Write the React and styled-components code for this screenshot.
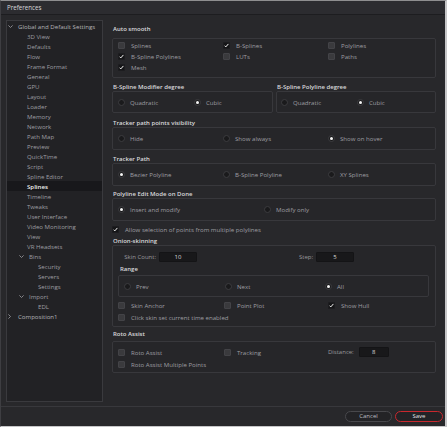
import React from 'react'
import styled, { createGlobalStyle } from 'styled-components'

const GlobalStyle = createGlobalStyle`
  html, body {
    margin: 0;
    padding: 0;
    background: #28282b;
  }
  body {
    font-family: "Open Sans", "Noto Sans", sans-serif;
    -webkit-font-smoothing: antialiased;
  }
`

const Window = styled.div`
  width: 447px;
  height: 427px;
  box-sizing: border-box;
  display: flex;
  flex-direction: column;
  background: #28282b;
  border-top: 1px solid #8e8e90;
  border-right: 2px solid #c6c6c8;
  border-bottom: 1px solid #c6c6c8;
  border-left: 1px solid #3e3e42;
  overflow: hidden;
`

const TitleBar = styled.div`
  flex: none;
  height: 13px;
  padding-left: 6px;
  font-size: 6.2px;
  line-height: 13px;
  color: #d8d8da;
  background: #2c2c30;
  border-bottom: 1px solid #1d1d20;
`

const Main = styled.div`
  flex: 1;
  min-height: 0;
  display: flex;
  gap: 9px;
  padding: 5px 9px 4px 5px;
`

const Sidebar = styled.div`
  width: 97px;
  flex: none;
  box-sizing: border-box;
  background: #222225;
  border: 1px solid #3a3a3e;
`

const TreeRow = styled.div`
  height: 10px;
  display: flex;
  align-items: center;
  padding-left: ${p => p.$indent}px;
  font-size: 6.1px;
  color: ${p => (p.$selected ? '#f2f2f2' : p.$strong ? '#b4b4b8' : '#9e9ea2')};
  font-weight: ${p => (p.$selected ? 600 : 400)};
  background: ${p => (p.$selected ? '#18181b' : 'transparent')};
  white-space: nowrap;
`

const Twisty = styled.span`
  width: 10px;
  flex: none;
  display: flex;
  align-items: center;
`

const Content = styled.div`
  flex: 1;
  display: flex;
  flex-direction: column;
`

const SectionLabel = styled.div`
  height: 8px;
  line-height: 8px;
  padding-left: ${p => p.$inset || 1}px;
  margin-top: ${p => p.$mt || 0}px;
  margin-bottom: ${p => p.$mb || 0}px;
  font-size: 6px;
  font-weight: 600;
  color: #dadadc;
  white-space: nowrap;
`

const Group = styled.div`
  box-sizing: border-box;
  border: 1px solid #38383c;
  border-radius: 2px;
  background: #262629;
  margin-top: ${p => p.$mt || 0}px;
  padding: ${p => p.$pad || '0 5px'};
  height: ${p => (p.$h ? `${p.$h}px` : 'auto')};
`

const OptionGrid = styled.div`
  display: grid;
  grid-template-columns: ${p => p.$cols};
  grid-auto-rows: ${p => p.$row}px;
  align-items: center;
  height: ${p => (p.$fill ? '100%' : 'auto')};
  margin-top: ${p => p.$mt || 0}px;
`

const Option = styled.label`
  display: flex;
  align-items: center;
  gap: ${p => p.$gap || 5}px;
  font-size: 6.1px;
  color: #9e9ea2;
  white-space: nowrap;
  grid-column: ${p => p.$span || 'auto'};
`

const Box = styled.span`
  width: 7px;
  height: 7px;
  flex: none;
  box-sizing: border-box;
  border-radius: 1px;
  display: flex;
  align-items: center;
  justify-content: center;
  background: ${p => (p.$on ? '#151517' : '#3a3a3d')};
  border: 1px solid ${p => (p.$on ? '#1c1c1f' : '#434347')};
`

const Dot = styled.span`
  width: 7px;
  height: 7px;
  flex: none;
  box-sizing: border-box;
  border-radius: 50%;
  display: flex;
  align-items: center;
  justify-content: center;
  background: #1a1a1c;
  border: 1px solid #3c3c40;
  &::after {
    content: '';
    width: 3px;
    height: 3px;
    border-radius: 50%;
    background: ${p => (p.$on ? '#f4f4f4' : 'transparent')};
  }
`

const HalfPair = styled.div`
  display: grid;
  grid-template-columns: 161px 1fr;
  gap: 3px;
  margin-top: 5px;
`

const FieldRow = styled.div`
  display: grid;
  grid-template-columns: 38px 38px 113px 38px;
  gap: 3px;
  height: 10px;
  align-items: center;
`

const FieldLabel = styled.span`
  text-align: right;
  font-size: 6px;
  color: #9a9a9e;
  white-space: nowrap;
`

const Field = styled.span`
  height: 10px;
  width: ${p => p.$w || 38}px;
  box-sizing: border-box;
  background: #18181a;
  border: 1px solid #141416;
  border-radius: 1px;
  font-size: 6px;
  line-height: 8px;
  text-align: center;
  color: #d8d8da;
`

const Inline = styled.div`
  display: flex;
  align-items: center;
  gap: 5px;
`

const Footer = styled.div`
  flex: none;
  height: 19px;
  border-top: 1px solid #38383c;
  display: flex;
  align-items: center;
  justify-content: flex-end;
  gap: 3px;
  padding-right: 2px;
`

const Button = styled.div`
  width: ${p => p.$w}px;
  height: 11px;
  box-sizing: border-box;
  border-radius: 6px;
  border: 1px solid ${p => (p.$primary ? '#c8282e' : '#48484c')};
  background: #232326;
  font-size: 6px;
  line-height: 9px;
  text-align: center;
  color: ${p => (p.$primary ? '#e2e2e4' : '#bdbdc0')};
`

const Chevron = ({ dir }) =>
  dir === 'right' ? (
    <svg width="3" height="5" viewBox="0 0 3 5">
      <polyline points="0.4,0.4 2.5,2.5 0.4,4.6" fill="none" stroke="#a0a0a4" strokeWidth="0.8" />
    </svg>
  ) : (
    <svg width="5" height="3" viewBox="0 0 5 3">
      <polyline points="0.4,0.4 2.5,2.5 4.6,0.4" fill="none" stroke="#a0a0a4" strokeWidth="0.8" />
    </svg>
  )

const Tick = () => (
  <svg width="5" height="5" viewBox="0 0 5 5">
    <polyline points="0.6,2.7 1.8,3.9 4.4,0.9" fill="none" stroke="#f2f2f2" strokeWidth="1" />
  </svg>
)

const Check = ({ on, children, span }) => (
  <Option $span={span} $gap={6}>
    <Box $on={on}>{on && <Tick />}</Box>
    {children}
  </Option>
)

const Radio = ({ on, children }) => (
  <Option>
    <Dot $on={on} />
    {children}
  </Option>
)

const tree = [
  { label: 'Global and Default Settings', level: 0, chevron: 'down', strong: true },
  ...['3D View', 'Defaults', 'Flow', 'Frame Format', 'General', 'GPU', 'Layout', 'Loader',
    'Memory', 'Network', 'Path Map', 'Preview', 'QuickTime', 'Script', 'Spline Editor'].map(l => ({ label: l, level: 1 })),
  { label: 'Splines', level: 1, selected: true },
  ...['Timeline', 'Tweaks', 'User Interface', 'Video Monitoring', 'View', 'VR Headsets'].map(l => ({ label: l, level: 1 })),
  { label: 'Bins', level: 1, chevron: 'down' },
  ...['Security', 'Servers', 'Settings'].map(l => ({ label: l, level: 2 })),
  { label: 'Import', level: 1, chevron: 'down' },
  { label: 'EDL', level: 2 },
  { label: 'Composition1', level: 0, chevron: 'right', strong: true },
]

const indents = [1, 10, 21]

const App = () => (
  <>
    <GlobalStyle />
    <Window>
      <TitleBar>Preferences</TitleBar>
      <Main>
        <Sidebar>
          {tree.map(item => (
            <TreeRow
              key={item.label}
              $indent={indents[item.level]}
              $selected={item.selected}
              $strong={item.strong}
            >
              <Twisty style={{ paddingLeft: item.level > 0 && item.chevron ? 2 : 0 }}>
                {item.chevron && <Chevron dir={item.chevron} />}
              </Twisty>
              {item.label}
            </TreeRow>
          ))}
        </Sidebar>

        <Content>
          <SectionLabel $mt={5} $mb={5}>Auto smooth</SectionLabel>
          <Group $pad="1px 5px 4px 5px">
            <OptionGrid $cols="105px 105px 1fr" $row={11}>
              <Check>Splines</Check>
              <Check on>B-Splines</Check>
              <Check>Polylines</Check>
              <Check on>B-Spline Polylines</Check>
              <Check>LUTs</Check>
              <Check>Paths</Check>
              <Check on>Mesh</Check>
            </OptionGrid>
          </Group>

          <HalfPair>
            <div>
              <SectionLabel>B-Spline Modifier degree</SectionLabel>
              <Group $h={22}>
                <OptionGrid $cols="76px 1fr" $row={20} $fill>
                  <Radio>Quadratic</Radio>
                  <Radio on>Cubic</Radio>
                </OptionGrid>
              </Group>
            </div>
            <div>
              <SectionLabel>B-Spline Polyline degree</SectionLabel>
              <Group $h={22} $pad="0 4px">
                <OptionGrid $cols="76px 1fr" $row={20} $fill>
                  <Radio>Quadratic</Radio>
                  <Radio on>Cubic</Radio>
                </OptionGrid>
              </Group>
            </div>
          </HalfPair>

          <SectionLabel $mt={6}>Tracker path points visibility</SectionLabel>
          <Group $h={23}>
            <OptionGrid $cols="105px 105px 1fr" $row={21} $fill>
              <Radio>Hide</Radio>
              <Radio>Show always</Radio>
              <Radio on>Show on hover</Radio>
            </OptionGrid>
          </Group>

          <SectionLabel $mt={5}>Tracker Path</SectionLabel>
          <Group $h={23}>
            <OptionGrid $cols="105px 105px 1fr" $row={21} $fill>
              <Radio on>Bezier Polyline</Radio>
              <Radio>B-Spline Polyline</Radio>
              <Radio>XY Splines</Radio>
            </OptionGrid>
          </Group>

          <SectionLabel $mt={4}>Polyline Edit Mode on Done</SectionLabel>
          <Group $h={23}>
            <OptionGrid $cols="146px 1fr" $row={21} $fill>
              <Radio on>Insert and modify</Radio>
              <Radio>Modify only</Radio>
            </OptionGrid>
          </Group>

          <OptionGrid $cols="1fr" $row={10} $mt={3}>
            <Check on>Allow selection of points from multiple polylines</Check>
          </OptionGrid>

          <SectionLabel $mt={3}>Onion-skinning</SectionLabel>
          <Group $pad="6px 6px 3px 5px">
            <FieldRow>
              <FieldLabel>Skin Count:</FieldLabel>
              <Field>10</Field>
              <FieldLabel>Step:</FieldLabel>
              <Field>5</Field>
            </FieldRow>
            <SectionLabel $mt={3} $inset={2}>Range</SectionLabel>
            <Group $h={22} $mt={2}>
              <OptionGrid $cols="101px 100px 1fr" $row={20} $fill>
                <Radio>Prev</Radio>
                <Radio>Next</Radio>
                <Radio on>All</Radio>
              </OptionGrid>
            </Group>
            <OptionGrid $cols="106px 104px 1fr" $row={12} $mt={2}>
              <Check>Skin Anchor</Check>
              <Check>Point Plot</Check>
              <Check on>Show Hull</Check>
              <Check span="1 / -1">Click skin set current time enabled</Check>
            </OptionGrid>
          </Group>

          <SectionLabel $mt={3} $mb={3}>Roto Assist</SectionLabel>
          <Group $pad="4px 5px 2px 5px">
            <OptionGrid $cols="106px 104px 1fr" $row={12}>
              <Check>Roto Assist</Check>
              <Check>Tracking</Check>
              <Inline>
                <FieldLabel>Distance:</FieldLabel>
                <Field $w={30}>8</Field>
              </Inline>
              <Check span="1 / -1">Roto Assist Multiple Points</Check>
            </OptionGrid>
          </Group>
        </Content>
      </Main>
      <Footer>
        <Button $w={47}>Cancel</Button>
        <Button $w={48} $primary>Save</Button>
      </Footer>
    </Window>
  </>
)

export default App
